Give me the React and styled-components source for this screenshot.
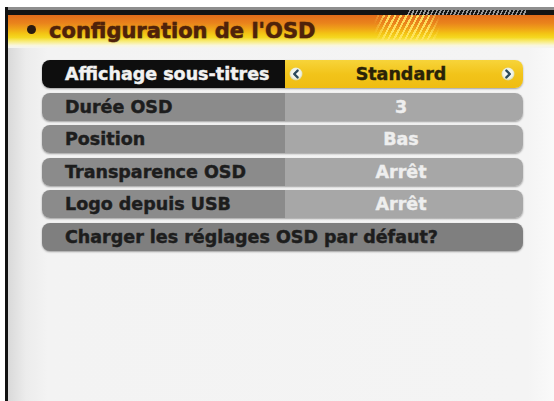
import React from 'react';
import styled, { createGlobalStyle } from 'styled-components';

const GlobalStyle = createGlobalStyle`
  html, body {
    margin: 0;
    padding: 0;
    background: #ffffff;
  }
  body {
    font-family: "DejaVu Sans", "Liberation Sans", sans-serif;
  }
`;

const Screen = styled.div`
  margin: 7px 0 0 5px;
  height: 394px;
  border-left: 3px solid #121212;
  background: linear-gradient(90deg, #d9d9d9 0px, #ececec 18px, #f3f3f3 40px, #f4f4f4 520px, #fafafa 546px);
  display: flex;
  flex-direction: column;
`;

const TopBar = styled.div`
  height: 5px;
  border-top: 3px solid #8e8e8e;
  background: #141414;
  display: flex;
`;

const Hatch = styled.div`
  margin-left: 399px;
  width: 120px;
  background: repeating-linear-gradient(115deg, transparent 0 2px, #9a9a9a 2px 3.5px);
`;

const TitleBand = styled.div`
  position: relative;
  height: 33px;
  display: flex;
  align-items: center;
  gap: 13px;
  padding-left: 19px;
  background: linear-gradient(180deg, #e26c1a 0%, #ea841c 25%, #f0a418 42%, #f3c414 56%, #f5d820 68%, #f8ec7c 80%, #f9f6dc 92%, #f4f4f2 100%);
`;

const Bullet = styled.span`
  width: 9px;
  height: 9px;
  border-radius: 50%;
  background: #2a1a10;
  margin-top: -5px;
`;

const Title = styled.h1`
  margin: 0;
  margin-top: -1px;
  font-size: 21px;
  font-weight: 700;
  color: #4f220a;
  -webkit-text-stroke: 0.4px #4f220a;
  text-shadow: 0 0 1.5px rgba(90, 40, 10, 0.6);
`;

const Stripes = styled.span`
  position: absolute;
  left: 366px;
  top: 0;
  width: 66px;
  height: 26px;
  background: repeating-linear-gradient(118deg, transparent 0 3px, rgba(255, 230, 100, 0.9) 3px 5px);
  -webkit-mask: linear-gradient(90deg, transparent 0, #000 12px, #000 54px, transparent 66px);
`;

const List = styled.div`
  display: flex;
  flex-direction: column;
  gap: 4.6px;
  padding: 12px 0 0 34px;
  width: 481px;
`;

const Row = styled.div`
  display: flex;
  height: 28px;
  border-radius: 8px;
  overflow: hidden;
  box-shadow: 0 1px 2px rgba(0, 0, 0, 0.35);
  background: ${({ $full }) => ($full ? '#7f7f7f' : 'transparent')};
`;

const Label = styled.div`
  width: 243px;
  flex: ${({ $full }) => ($full ? 1 : 'none')};
  display: flex;
  align-items: center;
  padding-left: 23px;
  box-sizing: border-box;
  font-size: 17.5px;
  font-weight: 700;
  color: ${({ $active }) => ($active ? '#f2f2f2' : '#1d1d1d')};
  -webkit-text-stroke: 0.45px ${({ $active }) => ($active ? '#f2f2f2' : '#1d1d1d')};
  background: ${({ $active, $full }) =>
    $active ? '#0e0e0e' : $full ? 'transparent' : '#8b8b8b'};
  white-space: nowrap;
`;

const Value = styled.div`
  flex: 1;
  display: flex;
  align-items: center;
  justify-content: ${({ $active }) => ($active ? 'space-between' : 'center')};
  padding: 0 8px 0 4px;
  font-size: 17.5px;
  font-weight: 700;
  color: ${({ $active }) => ($active ? '#2a2208' : '#eeeeee')};
  -webkit-text-stroke: 0.4px ${({ $active }) => ($active ? '#2a2208' : '#eeeeee')};
  background: ${({ $active }) =>
    $active ? 'linear-gradient(180deg, #f7d43a 0%, #f2c41a 50%, #efbd12 100%)' : '#a7a7a7'};
`;

const ValueText = styled.span`
  flex: 1;
  text-align: center;
  margin-left: -2px;
`;

const Arrow = ({ dir }) => (
  <svg width="14" height="14" viewBox="0 0 14 14">
    <defs>
      <radialGradient id={`g-${dir}`} cx="50%" cy="45%" r="55%">
        <stop offset="0%" stopColor="#ffffff" />
        <stop offset="70%" stopColor="#eef2e6" />
        <stop offset="100%" stopColor="#d9d28a" />
      </radialGradient>
    </defs>
    <circle cx="7" cy="7" r="6.5" fill={`url(#g-${dir})`} />
    <path
      d={dir === 'left' ? 'M8.6 3.6 L5.2 7 L8.6 10.4' : 'M5.4 3.6 L8.8 7 L5.4 10.4'}
      fill="none"
      stroke="#2b4a5c"
      strokeWidth="2.4"
      strokeLinecap="round"
      strokeLinejoin="round"
    />
  </svg>
);

const rows = [
  { label: 'Affichage sous-titres', value: 'Standard', active: true },
  { label: 'Durée OSD', value: '3' },
  { label: 'Position', value: 'Bas' },
  { label: 'Transparence OSD', value: 'Arrêt' },
  { label: 'Logo depuis USB', value: 'Arrêt' },
  { label: 'Charger les réglages OSD par défaut?', full: true },
];

const App = () => {
  return (
    <>
      <GlobalStyle />
      <Screen>
        <TopBar>
          <Hatch />
        </TopBar>
        <TitleBand>
          <Bullet />
          <Title>configuration de l'OSD</Title>
          <Stripes />
        </TitleBand>
        <List>
          {rows.map((r) => (
            <Row key={r.label} $full={r.full}>
              <Label $active={r.active} $full={r.full}>
                {r.label}
              </Label>
              {!r.full && (
                <Value $active={r.active}>
                  {r.active && <Arrow dir="left" />}
                  <ValueText>{r.value}</ValueText>
                  {r.active && <Arrow dir="right" />}
                </Value>
              )}
            </Row>
          ))}
        </List>
      </Screen>
    </>
  );
};

export default App;
